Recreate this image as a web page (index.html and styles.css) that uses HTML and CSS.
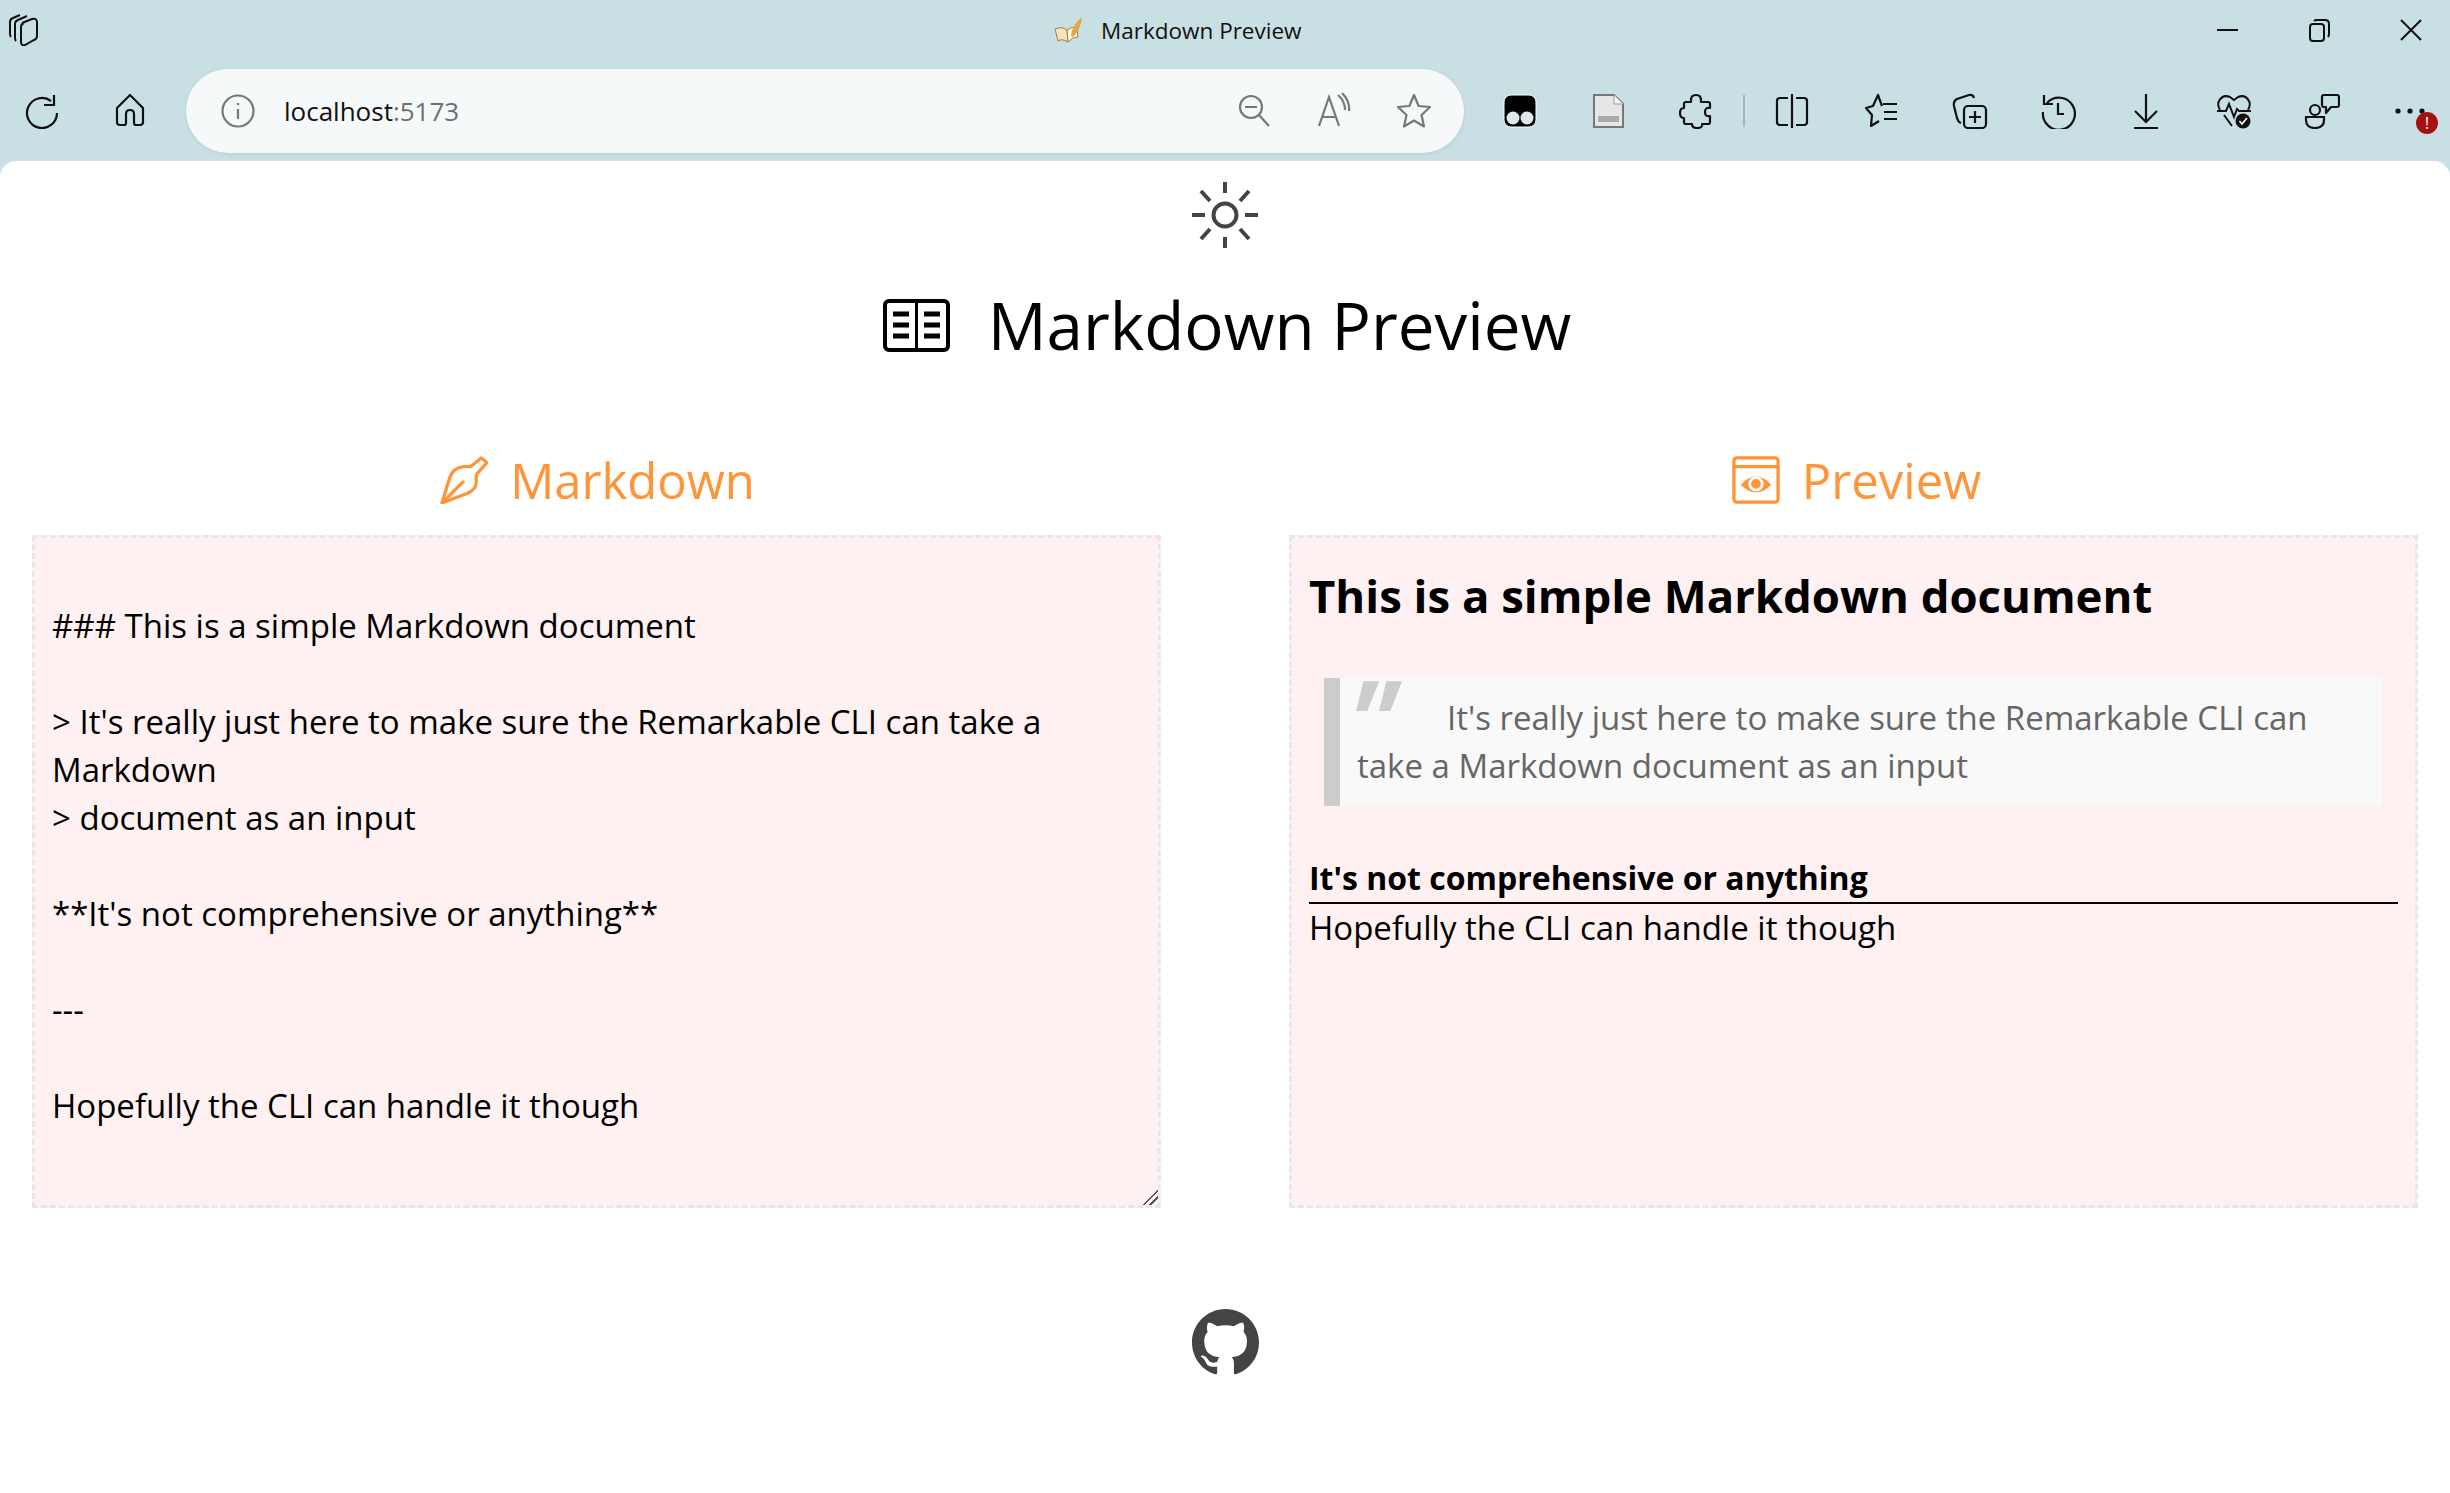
FILE: index.html
```html
<!DOCTYPE html>
<html lang="en">
<head>
    <meta charset="UTF-8">
    <meta name="viewport" content="width=device-width, initial-scale=1.0">
    <title>Markdown Preview</title>
    <link rel="stylesheet" href="styles.css">
</head>
<body>
    <div class="titlebar">
        <svg class="workspaces" viewBox="0 0 33 32" fill="none" stroke="#111" stroke-width="2"><path d="M17 9 L27 5 Q32 4 32 8 V22 Q32 25 29 26 L20 31 Q16 32 16 28 V13 Q16 10 19 9"/><path d="M11 27 Q10 26 10 24 V10 Q10 7 13 6 L22 2"/><path d="M6 23 Q5 22 5 20 V8 Q5 5 8 4 L15 1"/></svg>
        <div class="tab-title">
            <svg class="favicon" viewBox="0 0 28 26"><path d="M1 12 Q8 9 13 13 L14 25 Q8 21 4 24 Z" fill="#f7e3b8" stroke="#a97c3c"/><path d="M13 13 Q18 9 23 11 L24 20 Q18 20 14 25 Z" fill="#fff6dc" stroke="#a97c3c"/><path d="M17 19 Q18 8 28 0 Q27 12 19 20 Z" fill="#dfa64a"/></svg>
            <span>Markdown Preview</span>
        </div>
        <div class="window-controls">
            <svg viewBox="0 0 24 24" stroke="#111" stroke-width="2" fill="none"><path d="M2 12 H23"/></svg>
            <svg viewBox="0 0 24 24" stroke="#111" stroke-width="2" fill="none"><rect x="3" y="6" width="14" height="17" rx="3"/><path d="M7 3 Q8 2 10 2 H18 Q22 2 22 6 V16 Q22 18 21 19"/></svg>
            <svg viewBox="0 0 24 24" stroke="#111" stroke-width="2" fill="none"><path d="M2 2 L22 22 M22 2 L2 22"/></svg>
        </div>
    </div>

    <div class="toolbar">
        <div class="btn"><svg viewBox="0 0 36 36" class="line"><path d="M30 2 V12 H20"/><path d="M27 8 A15 15 0 1 0 33 20"/></svg></div>
        <div class="btn"><svg viewBox="0 0 36 36" class="line"><path d="M5 15 L18 2 L31 15 V29 Q31 32 28 32 H24 Q22 32 22 30 V21 Q22 17 18 17 Q14 17 14 21 V30 Q14 32 12 32 H8 Q5 32 5 29 Z" stroke-linejoin="round"/></svg></div>

        <div class="address">
            <svg viewBox="0 0 36 36" class="addr-icon line gray"><circle cx="18" cy="18" r="15.5"/><path d="M18 16 V26 M18 10 V12"/></svg>
            <span class="url">localhost<span class="port">:5173</span></span>
            <div class="addr-actions">
                <svg viewBox="0 0 36 36" class="addr-icon line gray"><circle cx="15" cy="14" r="11"/><path d="M9 14 H21 M23 22 L33 33"/></svg>
                <svg viewBox="0 0 36 36" class="addr-icon line gray"><path d="M3 33 L13 4 L23 33 M6 24 H20"/><path d="M22 2 Q29 8 29 17 M26 0 Q34 8 33 18"/></svg>
                <svg viewBox="0 0 36 36" class="addr-icon line gray"><path d="M18 2 L22.6 13 L34 14 L25.5 22 L28 33.5 L18 27.5 L8 33.5 L10.5 22 L2 14 L13.4 13 Z" stroke-linejoin="round"/></svg>
            </div>
        </div>

        <div class="btn"><svg viewBox="0 0 36 36"><rect x="2" y="2" width="32" height="32" rx="7" fill="#000" stroke="#fff" stroke-width="1"/><circle cx="11" cy="25" r="6.5" fill="#dce9ec"/><circle cx="25" cy="25" r="6.5" fill="#dce9ec"/></svg></div>
        <div class="btn"><svg viewBox="0 0 36 36"><path d="M4 2 H24 L33 11 V34 H4 Z" fill="#e6e6e6" stroke="#777" stroke-width="2"/><path d="M24 2 V11 H33" fill="#f6f6f6" stroke="#999" stroke-width="1"/><rect x="8" y="23" width="21" height="6" fill="#aaa"/></svg></div>
        <div class="btn"><svg viewBox="0 0 36 36" class="line"><path d="M13 7 Q13 2 18 2 Q23 2 23 7 Q23 9 23 9 H30 Q32 9 32 11 V15 Q27 14 27 19 Q27 24 32 23 V29 Q32 31 30 31 H24 Q25 35 19 35 Q14 35 14 31 H8 Q6 31 6 29 V25 Q2 25 2 20 Q2 15 6 15 V11 Q6 9 8 9 H13 Z" stroke-linejoin="round"/></svg></div>
        <div class="sep"></div>
        <div class="btn split"><svg viewBox="0 0 36 36" class="line"><path d="M14 5 H6 Q3 5 3 8 V29 Q3 32 6 32 H14 M22 5 H30 Q33 5 33 8 V29 Q33 32 30 32 H22 M18 1 V35"/></svg></div>
        <div class="btn"><svg viewBox="0 0 36 36" class="line"><path d="M18 13 L14 2 L9 13 L2 15 L8 22 L7 33 L15 28" stroke-linejoin="round"/><path d="M19 11 H33 M20 19 H33 M20 26 H33"/></svg></div>
        <div class="btn"><svg viewBox="0 0 36 36" class="line"><path d="M9 30 Q6 29 5 25 L2 13 Q1 8 5 6 L17 2 Q21 1 22 5"/><rect x="12" y="13" width="22" height="22" rx="4"/><path d="M23 18 V30 M17 24 H29"/></svg></div>
        <div class="btn"><svg viewBox="0 0 36 36" class="line"><path d="M7 10 A16 16 0 1 1 3 19"/><path d="M4 2 V11 H13"/><path d="M18 10 V21 H24"/></svg></div>
        <div class="btn"><svg viewBox="0 0 36 36" class="line"><path d="M18 1 V29 M7 18 L18 29 L29 18 M6 35 H30"/></svg></div>
        <div class="btn"><svg viewBox="0 0 36 36"><path class="line-path" d="M4 17 Q1 12 3 8 Q7 1 14 4 L18 7 L22 4 Q29 1 33 8 Q35 12 32 17 M8 22 L16 33"/><path class="line-path" d="M1 18 H10 L13 11 L18 24 L21 16 L23 18 H35"/><circle cx="27" cy="28" r="7.5" fill="#111"/><path d="M23.5 28 L26 31 L31 25" stroke="#fff" stroke-width="1.6" fill="none"/></svg></div>
        <div class="btn"><svg viewBox="0 0 36 36" class="line"><circle cx="11" cy="17" r="5"/><path d="M2 24 H20 V27 Q20 35 11 35 Q2 35 2 27 Z"/><path d="M20 2 H33 Q35 2 35 4 V12 Q35 14 33 14 H27 L22 20 V14 H20 Q18 14 18 12 V4 Q18 2 20 2 Z" stroke-linejoin="round"/></svg></div>
        <div class="btn more">
            <svg viewBox="0 0 36 36"><circle cx="6" cy="18" r="2.6" fill="#111"/><circle cx="18" cy="18" r="2.6" fill="#111"/><circle cx="30" cy="18" r="2.6" fill="#111"/></svg>
            <span class="badge">!</span>
        </div>
    </div>

    <div class="page">
        <svg class="sun" viewBox="0 0 66 66" fill="none" stroke="#444" stroke-width="4"><circle cx="33" cy="33" r="11.5"/><path d="M33 0 V11 M33 55 V66 M0 33 H13 M53 33 H66 M9 9 L18 19 M57 9 L48 19 M9 57 L18 47 M57 57 L48 47"/></svg>

        <h1 class="main-title">
            <svg class="book" viewBox="0 0 67 53" fill="none" stroke="#000"><rect x="2" y="2" width="63" height="49" rx="4" stroke-width="4"/><path d="M33.5 2 V51" stroke-width="3"/><path d="M10 15 H26 M10 26 H26 M10 37 H26 M41 15 H57 M41 26 H57 M41 37 H57" stroke-width="5"/></svg>
            Markdown Preview
        </h1>

        <div class="columns">
            <section>
                <h2 class="col-title">
                    <svg class="col-icon" viewBox="0 0 50 50" fill="none" stroke="#ff9438" stroke-width="3.4" stroke-linejoin="round" stroke-linecap="round"><path d="M2 49 L10 23 Q13 12 25 11 L32 11 L43 2 L49 7 L39 18 Q37 21 38 26 Q38 35 28 39 Z"/><path d="M3 48 L24 27"/></svg>
                    Markdown
                </h2>
                <textarea class="panel editor" spellcheck="false">

### This is a simple Markdown document

&gt; It's really just here to make sure the Remarkable CLI can take a Markdown
&gt; document as an input

**It's not comprehensive or anything**

---

Hopefully the CLI can handle it though</textarea>
            </section>
            <section>
                <h2 class="col-title preview-title">
                    <svg class="col-icon" viewBox="0 0 50 50" fill="none" stroke="#ff9438" stroke-width="3.4"><rect x="2" y="2" width="46" height="46" rx="3"/><path d="M2 11 H48"/><path d="M9 30 Q25 12 41 30 Q25 46 9 30 Z" fill="#ff9438" stroke="none"/><circle cx="25" cy="29" r="6.5" fill="#ff9438" stroke="#fff" stroke-width="3"/></svg>
                    Preview
                </h2>
                <div class="panel preview">
                    <h3>This is a simple Markdown document</h3>
                    <blockquote>It's really just here to make sure the Remarkable CLI can take a Markdown document as an input</blockquote>
                    <p class="strong-line"><strong>It's not comprehensive or anything</strong></p>
                    <hr>
                    <p>Hopefully the CLI can handle it though</p>
                </div>
            </section>
        </div>

        <svg class="github" viewBox="0 0 16 16"><path fill="#444" d="M8 0C3.58 0 0 3.58 0 8c0 3.54 2.29 6.53 5.47 7.59.4.07.55-.17.55-.38 0-.19-.01-.82-.01-1.49-2.01.37-2.53-.49-2.69-.94-.09-.23-.48-.94-.82-1.13-.28-.15-.68-.52-.01-.53.63-.01 1.08.58 1.23.82.72 1.21 1.87.87 2.33.66.07-.52.28-.87.51-1.07-1.78-.2-3.64-.89-3.64-3.95 0-.87.31-1.59.82-2.15-.08-.2-.36-1.02.08-2.12 0 0 .67-.21 2.2.82.64-.18 1.32-.27 2-.27.68 0 1.36.09 2 .27 1.53-1.04 2.2-.82 2.2-.82.44 1.1.16 1.92.08 2.12.51.56.82 1.27.82 2.15 0 3.07-1.87 3.75-3.65 3.95.29.25.54.73.54 1.48 0 1.07-.01 1.93-.01 2.2 0 .21.15.46.55.38A8.013 8.013 0 0016 8c0-4.42-3.58-8-8-8z"/></svg>
    </div>
</body>
</html>
```

FILE: styles.css
```css
* {
    box-sizing: border-box;
}
html, body {
    height: 100%;
}
body {
    margin: 0;
    font-family: "Open Sans", "Noto Sans", sans-serif;
    background-color: #c8dfe3;
    color: #000;
    overflow: hidden;
}

/* browser frame */
.titlebar {
    height: 60px;
    display: flex;
    align-items: center;
    padding: 0 27px 0 5px;
}
.workspaces {
    width: 33px;
    height: 32px;
}
.tab-title {
    margin-left: 1016px;
    display: flex;
    align-items: center;
    gap: 19px;
    font-size: 22.5px;
    color: #111;
}
.favicon {
    width: 28px;
    height: 26px;
}
.window-controls {
    margin-left: auto;
    display: flex;
    gap: 68px;
}
.window-controls svg {
    width: 24px;
    height: 24px;
}
.toolbar {
    height: 101px;
    padding: 9px 12px 8px 14px;
    display: flex;
    align-items: center;
    gap: 32px;
}
.btn {
    width: 56px;
    height: 56px;
    flex: none;
    display: flex;
    align-items: center;
    justify-content: center;
}
.btn svg {
    width: 36px;
    height: 36px;
}
.split {
    margin-right: 2px;
}
.line, .addr-icon {
    fill: none;
    stroke: #111;
    stroke-width: 2.2;
}
.line-path {
    fill: none;
    stroke: #111;
    stroke-width: 2;
}
.gray {
    stroke: #777;
}
.sep {
    width: 2px;
    height: 32px;
    margin: 0 -13px;
    background-color: #a9b7bb;
}
.address {
    flex: 1;
    height: 84px;
    margin: 0 -4px;
    padding: 0 32px 0 34px;
    border-radius: 42px;
    background-color: #f5f9fa;
    box-shadow: 0 1px 4px rgba(0, 0, 0, 0.08);
    display: flex;
    align-items: center;
    gap: 28px;
}
.addr-icon {
    width: 36px;
    height: 36px;
    flex: none;
}
.url {
    font-size: 26px;
    color: #111;
}
.port {
    color: #6f6f6f;
}
.addr-actions {
    margin-left: auto;
    display: flex;
    gap: 44px;
}
.more {
    position: relative;
}
.badge {
    position: absolute;
    left: 34px;
    top: 29px;
    width: 22px;
    height: 22px;
    border-radius: 50%;
    background-color: #a51111;
    color: #fff;
    font-size: 17px;
    line-height: 22px;
    text-align: center;
}

/* page */
.page {
    height: 1332px;
    background-color: #fff;
    border-radius: 16px 16px 0 0;
    padding: 21px 32px 0;
    display: flex;
    flex-direction: column;
    align-items: center;
}
.sun {
    width: 66px;
    height: 66px;
    flex: none;
}
.main-title {
    margin: 29px 0 0;
    padding-left: 4px;
    height: 96px;
    display: flex;
    align-items: center;
    gap: 38px;
    font-size: 65.5px;
    font-weight: 400;
    line-height: 96px;
}
.book {
    width: 67px;
    height: 53px;
    flex: none;
}
.columns {
    width: 100%;
    margin-top: 75px;
    display: grid;
    grid-template-columns: 1fr 1fr;
    gap: 128px;
}
.col-title {
    margin: 0 0 23px;
    padding-left: 2px;
    height: 64px;
    display: flex;
    align-items: center;
    justify-content: center;
    gap: 22px;
    font-size: 49px;
    font-weight: 400;
    color: #ff9438;
}
.preview-title {
    padding-left: 6px;
}
.col-icon {
    width: 48px;
    height: 48px;
    flex: none;
}
.panel {
    display: block;
    width: 100%;
    height: 673px;
    border: 3px dashed #e5e7eb;
    background-color: #fff1f1;
    padding: 16px 17px;
    font-family: inherit;
    font-size: 33px;
    line-height: 48px;
    color: #000;
}
.editor {
    outline: none;
    margin: 0;
}
.editor::-webkit-resizer {
    background: linear-gradient(135deg, transparent 48%, #555 48%, #555 56%, transparent 56%, transparent 70%, #555 70%, #555 78%, transparent 78%);
}
.preview h3 {
    margin: 9px 0 51px;
    font-size: 45.5px;
    font-weight: 700;
    line-height: 64px;
}
.preview blockquote {
    margin: 0 16px 48px 15px;
    padding: 16px 17px;
    border-left: 16px solid #ccc;
    background-color: #f9f9f9;
    color: #666;
}
.preview blockquote::before {
    content: '"';
    display: inline-block;
    width: 76px;
    margin-left: -13px;
    margin-right: 27px;
    font-size: 116px;
    font-style: italic;
    font-weight: 700;
    line-height: 0;
    vertical-align: -34px;
    color: #ccc;
    transform: skewX(-6deg);
}
.preview p {
    margin: 0;
}
.preview strong {
    font-size: 32px;
}
.preview hr {
    margin: 0;
    border: none;
    border-top: 2px solid #000;
}
.github {
    width: 67px;
    height: 67px;
    margin-top: 101px;
    flex: none;
}
```
